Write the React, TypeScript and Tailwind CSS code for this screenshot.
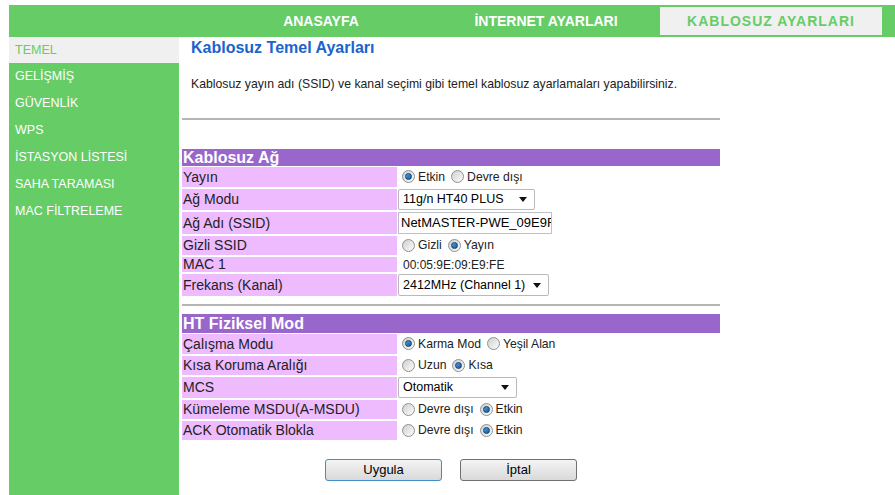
import React from "react";

const tabs = [
  { name: "ANASAYFA", active: false },
  { name: "İNTERNET AYARLARI", active: false },
  { name: "KABLOSUZ AYARLARI", active: true },
];

const menu = [
  "TEMEL",
  "GELİŞMİŞ",
  "GÜVENLİK",
  "WPS",
  "İSTASYON LİSTESİ",
  "SAHA TARAMASI",
  "MAC FİLTRELEME",
];

const Radio = ({ on }: { on?: boolean }) => (
  <span className="inline-flex h-[13px] w-[13px] shrink-0 items-center justify-center rounded-full border border-[#8e8f8f] bg-linear-to-br from-[#cfcfcf] to-[#fdfdfd]">
    {on && (
      <span className="h-[7px] w-[7px] rounded-full border border-[#123f6b] bg-linear-to-br from-[#4aa3e8] to-[#0f5a9e]" />
    )}
  </span>
);

const Radios = ({ items }: { items: [string, boolean][] }) => (
  <div className="flex items-center pl-[4px] text-[12.2px] text-[#222]">
    {items.map(([t, on]) => (
      <div key={t} className="mr-[6px] flex items-center gap-[3px]">
        <Radio on={on} />
        <span>{t}</span>
      </div>
    ))}
  </div>
);

const Select = ({ text, w }: { text: string; w: string }) => (
  <div
    className={`${w} flex h-full items-center justify-between rounded-[2px] border border-[#b9b9b9] bg-white pl-[4px] pr-[7px] text-[12.5px] text-black`}
  >
    <span className="whitespace-nowrap">{text}</span>
    <svg width="8" height="5" viewBox="0 0 8 5" className="shrink-0">
      <path d="M0 0h8L4 5z" fill="#111" />
    </svg>
  </div>
);

const Row = ({
  label,
  h,
  children,
  first,
}: {
  label: string;
  h: string;
  children?: React.ReactNode;
  first?: boolean;
}) => (
  <div className={`flex ${h} ${first ? "mt-[1px]" : "mt-[2px]"}`}>
    <div className="flex w-[215px] shrink-0 items-center bg-[#eebbff] pl-[1px] text-[14px] text-[#222]">
      {label}
    </div>
    <div className="ml-[1px] flex flex-1 items-center bg-white">{children}</div>
  </div>
);

const Header = ({ title, h }: { title: string; h: string }) => (
  <div
    className={`flex ${h} items-center bg-[#9966cc] pl-[1px] text-[16px] font-bold text-white`}
  >
    {title}
  </div>
);

const Rule = () => <div className="h-[2px] w-full bg-[#b4b4b4]" />;

export default function App() {
  return (
    <div className="min-h-[495px] bg-white pl-[9px] pt-[5px] font-['Liberation_Sans',Arial,sans-serif]">
      <div className="flex h-[32px] items-center gap-[3px] bg-[#66cc66] pl-[201px]">
        {tabs.map((t) => (
          <div
            key={t.name}
            className={`flex h-[28px] w-[222px] items-center justify-center text-[14px] font-bold ${
              t.active
                ? "bg-[#f0f0f0] tracking-[1px] text-[#66cc66]"
                : "text-white"
            }`}
          >
            {t.name}
          </div>
        ))}
      </div>

      <div className="flex min-h-[458px]">
        <div className="w-[170px] shrink-0 bg-[#66cc66]">
          {menu.map((m, i) => (
            <div
              key={m}
              className={`flex items-center pl-[6px] text-[12.5px] ${
                i === 0
                  ? "h-[26px] bg-[#f0f0f0] text-[#66cc66]"
                  : "h-[27px] text-white"
              }`}
            >
              {m}
            </div>
          ))}
        </div>

        <div className="w-[541px] pl-[3px]">
          <div className="mt-[1px] h-[20px] pl-[9px] text-[16px] font-bold leading-[20px] text-[#1a64cc]">
            Kablosuz Temel Ayarları
          </div>
          <div className="mt-[18px] h-[16px] pl-[9px] text-[12.25px] leading-[16px] text-[#222]">
            Kablosuz yayın adı (SSID) ve kanal seçimi gibi temel kablosuz ayarlamaları yapabilirsiniz.
          </div>
          <div className="mt-[26px]">
            <Rule />
          </div>

          <div className="mt-[29px]">
            <Header title="Kablosuz Ağ" h="h-[17px]" />
            <Row label="Yayın" h="h-[20px]" first>
              <Radios items={[["Etkin", true], ["Devre dışı", false]]} />
            </Row>
            <Row label="Ağ Modu" h="h-[21px]">
              <Select text="11g/n HT40 PLUS" w="w-[137px]" />
            </Row>
            <Row label="Ağ Adı (SSID)" h="h-[22px]">
              <div className="flex h-full w-[154px] items-center overflow-hidden whitespace-nowrap border border-[#bfc1c8] bg-white pl-[2px] text-[13px] text-black">
                NetMASTER-PWE_09E9FE
              </div>
            </Row>
            <Row label="Gizli SSID" h="h-[19px]">
              <Radios items={[["Gizli", false], ["Yayın", true]]} />
            </Row>
            <Row label="MAC 1" h="h-[15px]">
              <span className="pl-[5px] text-[12px] text-[#222]">00:05:9E:09:E9:FE</span>
            </Row>
            <Row label="Frekans (Kanal)" h="h-[22px]">
              <Select text="2412MHz (Channel 1)" w="w-[151px]" />
            </Row>
          </div>

          <div className="mt-[8px]">
            <Rule />
          </div>

          <div className="mt-[8px]">
            <Header title="HT Fiziksel Mod" h="h-[19px]" />
            <Row label="Çalışma Modu" h="h-[20px]" first>
              <Radios items={[["Karma Mod", true], ["Yeşil Alan", false]]} />
            </Row>
            <Row label="Kısa Koruma Aralığı" h="h-[19px]">
              <Radios items={[["Uzun", false], ["Kısa", true]]} />
            </Row>
            <Row label="MCS" h="h-[21px]">
              <Select text="Otomatik" w="w-[119px]" />
            </Row>
            <Row label="Kümeleme MSDU(A-MSDU)" h="h-[19px]">
              <Radios items={[["Devre dışı", false], ["Etkin", true]]} />
            </Row>
            <Row label="ACK Otomatik Blokla" h="h-[19px]">
              <Radios items={[["Devre dışı", false], ["Etkin", true]]} />
            </Row>
          </div>

          <div className="mt-[19px] flex justify-center gap-[18px]">
            <button className="h-[22px] w-[117px] rounded-[3px] border border-[#3c8fc8] bg-linear-to-b from-[#f4f4f4] to-[#d9d9d9] text-[13px] text-black">
              Uygula
            </button>
            <button className="h-[22px] w-[117px] rounded-[3px] border border-[#707070] bg-linear-to-b from-[#f4f4f4] to-[#d9d9d9] text-[13px] text-black">
              İptal
            </button>
          </div>
        </div>
      </div>
    </div>
  );
}
